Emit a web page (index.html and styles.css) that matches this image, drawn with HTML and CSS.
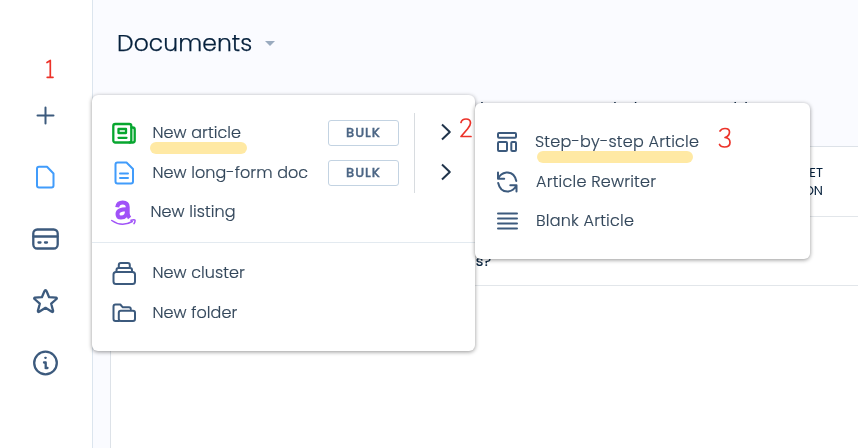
FILE: index.html
```html
<!DOCTYPE html>
<html lang="en">
<head>
<meta charset="utf-8">
<title>Documents</title>
<link rel="stylesheet" href="styles.css">
</head>
<body>
<div class="app">
  <nav class="sidebar">
    <svg viewBox="0 0 30 30" class="navy"><path d="M15.500 7.500v16M7.500 15.500h16"/></svg>
    <svg viewBox="0 0 30 30" class="blue"><path d="M9 4.800h8L23.500 11.500V23.500q0 2-2 2H9q-2 0-2-2V6.800q0-2 2-2z"/></svg>
    <svg viewBox="0 0 30 30" class="navy thick"><rect x="3.300" y="5.500" width="24.400" height="19" rx="4"/><path d="M3.500 12.500h24M8.500 18.500h2M15 18.500h2"/></svg>
    <svg viewBox="0 0 30 30" class="navy thick"><path d="M15.500 4.200q.7 0 1 .8l2.600 6.200 7 .5q1.200.4.4 1.300l-5.300 4.700 1.900 7.200q0 1.500-1.300.9l-6.300-4-6.300 4q-1.300.6-1.300-.9l1.900-7.200L4.500 13q-.8-.9.400-1.300l7-.5L14.500 5q.3-.8 1-.8z"/></svg>
    <svg viewBox="0 0 30 30" class="navy thick"><circle cx="15.500" cy="15" r="11.300"/><path d="M14 14.500h1.700v5.500M15.500 20h2M15.300 9.800h.4"/></svg>
  </nav>
  <main class="content">
    <header class="header"><h1>Documents</h1><span class="caret"></span></header>
    <div class="tabs"><span class="tab-by">by</span><span class="tab-led">led</span><span>Folder</span></div>
    <section class="table">
      <div class="thead"><span>TARGET<br>REGION</span></div>
      <div class="row"><span>keywords?</span></div>
    </section>
  </main>
</div>

<div class="menu create-menu">
  <div class="top-group">
    <div class="items">
      <div class="item"><svg viewBox="0 0 26 26" class="green thick"><rect x="2.300" y="4" width="18" height="18.500" rx="2"/><path d="M20.500 7.500h1.200q2 0 2 2v11q0 2-2 2h-3M7.500 9h7.500v4H7.500zM7.500 17.800h8"/></svg><span>New article</span></div>
      <div class="item"><svg viewBox="0 0 26 26" class="blue"><path d="M6.500 2.500h9l6.500 6.500V21.500q0 2-2 2H6.500q-2 0-2-2V4.500q0-2 2-2zM9 13.500h8M9 18h8"/></svg><span>New long-form doc</span></div>
      <div class="item listing"><svg viewBox="0 0 26 26" class="purple"><path class="letter" d="M6.200 7.200Q6.800 2.500 11.700 2.500q5 0 5 4.500v6.300q0 2.200 1.900 4.700"/><path class="letter" d="M16.500 9.300q-10-.3-10 4.700 0 3.600 3.500 3.600c4 0 6-2.600 6-6.600"/><path class="smile" d="M.8 20.500q10 7 20.500 1M20 20.200q3.500-1 4 0 .2 1.500-1 3.500"/></svg><span>New listing</span></div>
    </div>
    <div class="bulk"><button>BULK</button><button>BULK</button></div>
    <div class="arrows">
      <svg viewBox="0 0 14 20"><path d="M2 2.500l7.800 7.500L2 17.500"/></svg>
      <svg viewBox="0 0 14 20"><path d="M2 2.500l7.800 7.500L2 17.500"/></svg>
    </div>
  </div>
  <div class="bottom-group">
    <div class="item"><svg viewBox="0 0 26 26" class="navy"><rect x="2.500" y="12" width="21.500" height="12" rx="2.500"/><path d="M5.500 11.500V10q0-2 2-2H19q2 0 2 2v1.500M7.800 7.500V5q0-2 2-2h7q2 0 2 2v2.500"/></svg><span>New cluster</span></div>
    <div class="item"><svg viewBox="0 0 26 26" class="navy"><path d="M8 21H4.500q-2 0-2-2V6.500q0-2 2-2h4.800l2.500 2.800H18q1.800 0 1.800 2"/><rect x="7.800" y="10.800" width="16.200" height="10.200" rx="2"/></svg><span>New folder</span></div>
  </div>
</div>

<div class="menu article-menu">
  <div class="item"><svg viewBox="0 0 26 26" class="navy"><rect x="4" y="4" width="18" height="4.800" rx="1"/><rect x="4" y="13" width="9" height="9" rx="1"/><rect x="17.300" y="13" width="4.700" height="9" rx="1"/></svg><span>Step-by-step Article</span></div>
  <div class="item"><svg viewBox="0 0 26 26" class="navy"><path d="M4 3.500v6.200h6.200M4.300 9.500q2-5 8-6 8-.5 10 8.500M22.500 22.500v-6.200h-6.200M22.200 16.500q-2 5-8 6-8 .5-10-8.500"/></svg><span>Article Rewriter</span></div>
  <div class="item"><svg viewBox="0 0 26 26" class="navy"><path d="M4 5.500h19M4 10.500h19M4 15.500h19M4 20.500h19"/></svg><span>Blank Article</span></div>
</div>

<div class="mark mark-article"></div>
<div class="mark mark-step"></div>
<svg class="notes" viewBox="0 0 858 448"><path d="M47 62.500l3.300-2V77M47.200 77.300h5.800"/><path d="M461 122.500q1-3.500 5-3.500 4.500 0 4.500 4 0 2.500-3 6l-6.500 7.500h10"/><path d="M720 131q1.500-2.500 5-2.500 4.500 0 4.500 3.500 0 4-4.500 5.500 5 .5 5 5 0 4.500-5.500 4.500-4 0-5-2.500"/></svg>
</body>
</html>
```
FILE: styles.css
```css
* { box-sizing: border-box; }
body { margin: 0; width: 858px; height: 448px; overflow: hidden; background: #fff; color: #33475b; font-family: Poppins, Inter, sans-serif; }
svg { fill: none; stroke: currentColor; stroke-width: 2; stroke-linecap: round; stroke-linejoin: round; flex: none; }
.navy { color: #3c5a7d; }
.blue { color: #419cfb; }
.green { color: #07a62f; }
.purple { color: #a052f8; }
.thick { stroke-width: 2.3; }
.app { display: flex; height: 448px; }
.sidebar { width: 92px; padding: 100px 0 0 30px; display: flex; flex-direction: column; gap: 32px; }
.sidebar svg { width: 30px; height: 30px; }
.content { flex: 1; height: 448px; border-left: 1px solid #dce5ee; background: #fafbff; padding-left: 17px; display: flex; flex-direction: column; }
.header { height: 86px; display: flex; align-items: center; padding: 0 0 0 7px; }
h1 { margin: -2px 0 0; font-size: 23.500px; font-weight: 300; letter-spacing: .05px; width: 148px; color: #05203c; -webkit-text-stroke: .25px; }
.caret { border: 5px solid transparent; border-top-color: #9aabbf; border-bottom: 0; margin-top: 1px; }
.tabs { height: 60px; padding: 11px 0 0 370px; display: flex; font-size: 16px; line-height: 24px; color: #05203c; }
.tab-by { width: 133px; }
.tab-led { width: 102px; }
.table { flex: 1; border: 1px solid #dde2e8; border-right: 0; border-bottom: 0; background: #fff; color: #05203c; }
.thead { height: 70px; border-bottom: 1px solid #e2e6ea; padding: 17px 0 0 663px; font-size: 13px; line-height: 18px; }
.thead span { display: block; width: 49px; text-align: right; }
.row { height: 69px; border-bottom: 1px solid #e2e6ea; padding: 34px 0 0 300px; font-size: 14.500px; line-height: 20px; -webkit-text-stroke: .2px; }
.row span { display: block; width: 80px; text-align: right; }
.menu { position: absolute; background: #fff; border-radius: 6px; box-shadow: 0 1px 4px rgba(0,0,0,.42); }
.create-menu { left: 92px; top: 95px; width: 383px; height: 256px; }
.article-menu { left: 475px; top: 103px; width: 335px; height: 156px; padding: 19px 0 0 19px; }
.top-group { display: flex; height: 148px; padding: 18px 0 0 19px; border-bottom: 1px solid #e3eaf0; }
.items { width: 217px; }
.item { display: flex; align-items: center; height: 40px; gap: 15.500px; font-size: 16px; font-weight: 300; letter-spacing: .08px; white-space: nowrap; -webkit-text-stroke: .2px; }
.item span { padding-bottom: 2px; }
.item svg { width: 26px; height: 26px; }
.listing { height: 39px; gap: 13.500px; }
.purple .letter { stroke-width: 4; stroke-linecap: butt; }
.purple .smile { stroke-width: 1.5; }
.bottom-group { padding: 10px 0 0 19px; }
.bulk { width: 86px; padding-top: 7px; display: flex; flex-direction: column; gap: 14px; }
.bulk button { width: 71px; height: 26px; padding: 0 0 1px; background: #fff; border: 1px solid #c3d3e2; border-radius: 3px; color: #4c6685; font: 500 13px Poppins, Inter, sans-serif; letter-spacing: .9px; -webkit-text-stroke: .35px; }
.arrows { height: 80px; border-left: 1px solid #d8dce0; padding: 9px 0 0 25px; display: flex; flex-direction: column; gap: 20px; color: #20344b; }
.arrows svg { width: 14px; height: 20px; stroke-linecap: butt; }
.article-menu .item { gap: 16px; letter-spacing: .22px; }
.article-menu .item:first-child { gap: 15px; }
.article-menu .item:last-child { height: 38px; }
.mark { position: absolute; height: 12px; border-radius: 6px; background: #ffe79a; mix-blend-mode: multiply; opacity: .9; }
.mark-article { left: 150px; top: 142px; width: 97px; }
.mark-step { left: 537px; top: 151px; width: 156px; }
.notes { position: absolute; left: 0; top: 0; width: 858px; height: 448px; color: #ec3229; stroke-width: 1.7; }
```
